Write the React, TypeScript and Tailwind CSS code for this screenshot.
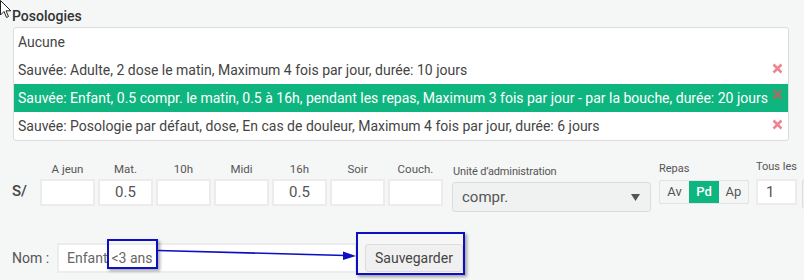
import React from "react";

const rows = [
  { text: "Aucune", del: false, active: false },
  { text: "Sauvée: Adulte, 2 dose le matin, Maximum 4 fois par jour, durée: 10 jours", del: true, active: false },
  { text: "Sauvée: Enfant, 0.5 compr. le matin, 0.5 à 16h, pendant les repas, Maximum 3 fois par jour - par la bouche, durée: 20 jours", del: true, active: true },
  { text: "Sauvée: Posologie par défaut, dose, En cas de douleur, Maximum 4 fois par jour, durée: 6 jours", del: true, active: false },
];

const cols = [
  { label: "A jeun", value: "" },
  { label: "Mat.", value: "0.5" },
  { label: "10h", value: "" },
  { label: "Midi", value: "" },
  { label: "16h", value: "0.5" },
  { label: "Soir", value: "" },
  { label: "Couch.", value: "" },
];

function XIcon({ color }: { color: string }) {
  return (
    <svg width="11" height="11" viewBox="0 0 11 11">
      <path d="M1.5 1.5 L9.5 9.5 M9.5 1.5 L1.5 9.5" stroke={color} strokeWidth="2.6" strokeLinecap="butt" />
    </svg>
  );
}

export default function App() {
  return (
    <div
      className="relative w-[804px] h-[280px] overflow-hidden bg-[#f5f6f6] text-[#444]"
      style={{ fontFamily: "Roboto, 'Liberation Sans', sans-serif" }}
    >
      {/* mouse cursor */}
      <svg className="absolute left-0 top-0" width="12" height="20" viewBox="0 0 12 20">
        <path d="M0.5 0.5 L0.5 15 L4 11.5 L6.5 17.5 L8.5 16.5 L6 10.8 L10.8 10.8 Z" fill="#fff" stroke="#222" strokeWidth="1" />
      </svg>

      <div className="pl-[12px] pt-[6px] text-[14px] leading-[20px] font-medium text-[#333]">Posologies</div>

      <div className="ml-[13px] mt-[1px] w-[776px] rounded-[3px] border border-[#dcdcdc] bg-white">
        {rows.map((r, i) => (
          <div
            key={i}
            className={
              "flex h-[28px] items-center justify-between pl-[4px] pr-[5px] text-[14px] " +
              (r.active ? "bg-[#0fb57f] text-white" : "text-[#444]")
            }
          >
            <span className="whitespace-nowrap">{r.text}</span>
            {r.del && (
              <span className={r.active ? "-mt-[7px]" : "-mt-[4px]"}>
                <XIcon color={r.active ? "#a07060" : "#eb8792"} />
              </span>
            )}
          </div>
        ))}
      </div>

      {/* dosage row */}
      <div className="mt-[20px] flex items-start pl-[12px]">
        <div className="w-[28px] shrink-0 pt-[20px] text-[15px] leading-[20px] font-medium text-[#444]">S/</div>
        <div className="flex shrink-0 gap-[3px]">
          {cols.map((c) => (
            <div key={c.label} className="flex w-[55px] shrink-0 flex-col items-center">
              <div className="h-[16px] text-[11.5px] leading-[16px] text-[#555]">{c.label}</div>
              <div className="mt-[2px] flex h-[27px] w-[55px] items-center justify-center border-2 border-[#ececec] bg-white text-[15px] text-[#555]">
                {c.value}
              </div>
            </div>
          ))}
        </div>

        <div className="ml-[9px] flex shrink-0 flex-col pt-[3px]">
          <div className="h-[16px] pl-[1px] text-[11px] leading-[16px] tracking-[-0.15px] text-[#555]">Unité d’administration</div>
          <div className="mt-[2px] flex h-[30px] w-[199px] items-center justify-between rounded-[3px] border border-[#dcdcdc] bg-[#f0f1f1] pl-[9px] pr-[10px]">
            <span className="text-[15px] text-[#555]">compr.</span>
            <svg width="9" height="7" viewBox="0 0 9 7">
              <path d="M0 0 L9 0 L4.5 7 Z" fill="#555" />
            </svg>
          </div>
        </div>

        <div className="ml-[8px] flex shrink-0 flex-col">
          <div className="h-[16px] text-[11px] leading-[16px] text-[#555]">Repas</div>
          <div className="mt-[3px] flex h-[24px] overflow-hidden rounded-[2px] border border-[#e3e3e3] bg-[#f4f5f5] text-[13px]">
            <div className="flex w-[29px] items-center justify-center text-[#555]">Av</div>
            <div className="flex w-[30px] items-center justify-center bg-[#0fb57f] font-medium text-white">Pd</div>
            <div className="flex w-[29px] items-center justify-center text-[#555]">Ap</div>
          </div>
        </div>

        <div className="ml-[7px] flex shrink-0 flex-col">
          <div className="-mt-[2px] h-[16px] whitespace-nowrap text-[11px] leading-[16px] text-[#555]">Tous les</div>
          <div className="mt-[4px] flex h-[26px] w-[41px] items-center border-2 border-[#ececec] bg-white pl-[8px] text-[15px] text-[#555]">1</div>
        </div>
        <div className="ml-[5px] mt-[18px] h-[30px] w-[20px] shrink-0 rounded-[3px] border border-[#dcdcdc] bg-[#f0f1f1]" />
      </div>

      {/* name row */}
      <div className="mt-[31px] flex items-center pl-[12px]">
        <div className="w-[45px] shrink-0 text-[14px] text-[#555]">Nom :</div>
        <div className="flex h-[30px] w-[300px] shrink-0 items-center border-2 border-[#ececec] bg-white pl-[8px] text-[14px] text-[#666]">
          Enfant <span className="ml-[4px]">&lt;3 ans</span>
        </div>
        <div className="ml-[8px] flex h-[28px] shrink-0 items-center rounded-[3px] border border-[#dcdcdc] bg-[#f0f0f0] px-[9px] text-[14px] text-[#444]">
          Sauvegarder
        </div>
      </div>

      {/* annotations */}
      <div className="absolute left-[107px] top-[239px] h-[30px] w-[51px] border-2 border-[#0d10c2] shadow-[2px_2px_3px_rgba(0,0,0,0.35)]" />
      <div className="absolute left-[356px] top-[232px] h-[43px] w-[109px] border-2 border-[#0d10c2] shadow-[2px_2px_3px_rgba(0,0,0,0.35)]" />
      <svg className="absolute left-0 top-0" width="804" height="280" viewBox="0 0 804 280">
        <line x1="158" y1="250.5" x2="346" y2="255.5" stroke="#0d10c2" strokeWidth="1.6" />
        <path d="M356 256 L343 251.5 L343 260 Z" fill="#0d10c2" />
      </svg>
    </div>
  );
}
